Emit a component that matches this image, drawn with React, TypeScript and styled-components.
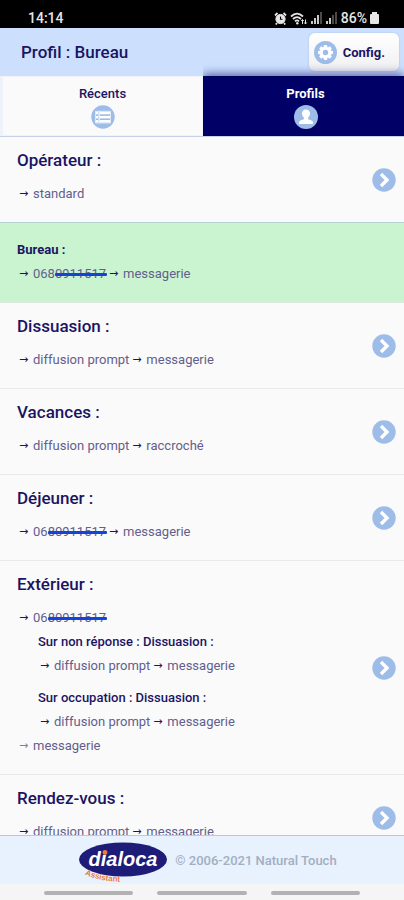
import React from "react";
import styled, { createGlobalStyle } from "styled-components";

const navy = "#1b1463";
const iconBlue = "#9dbce8";

const GlobalStyle = createGlobalStyle`
  * { box-sizing: border-box; }
  body {
    margin: 0;
    background: #fafafa;
    color: ${navy};
    font-family: Roboto, "Liberation Sans", sans-serif;
  }
  h1, h2, h3, p, ul { margin: 0; padding: 0; }
  ul { list-style: none; }
  button { font: inherit; color: inherit; border: 0; cursor: pointer; }
  svg { display: block; }
`;

const Screen = styled.div`
  display: flex;
  flex-direction: column;
  height: 100vh;
  overflow: hidden;
`;

const StatusBar = styled.div`
  flex: none;
  display: flex;
  align-items: flex-end;
  justify-content: space-between;
  height: 28px;
  padding: 0 25px 2px 28px;
  background: #000;
  color: #e6e6e6;
  font-size: 14px;
  font-weight: 500;
  line-height: 16px;
`;

const StatusIcons = styled.div`
  display: flex;
  align-items: center;
  gap: 3px;
`;

const Header = styled.header`
  flex: none;
  display: flex;
  align-items: center;
  justify-content: space-between;
  height: 48px;
  padding: 0 5px 0 21px;
  background: #cce0fe;
`;

const Title = styled.h1`
  font-size: 17px;
  font-weight: 500;
  line-height: 20px;
`;

const ConfigButton = styled.button`
  display: flex;
  align-items: center;
  gap: 6px;
  height: 38px;
  padding: 0 14px 0 5px;
  border-radius: 6px;
  background: linear-gradient(#ffffff, #f0f0f2);
  box-shadow: 0 0 2px rgba(80, 100, 150, 0.3);
  font-size: 13px;
  font-weight: 700;
`;

const Tabs = styled.nav`
  flex: none;
  display: grid;
  grid-template-columns: 1fr 1fr;
  height: 61px;
  padding-left: 2px;
  border-bottom: 1px solid #c5d2e8;
  background: #edf2fb;
`;

const Tab = styled.button<{ $active?: boolean }>`
  display: flex;
  flex-direction: column;
  align-items: center;
  gap: 3px;
  padding: ${(p) => (p.$active ? "9px 0 0 4px" : "9px 0 0")};
  border: 1px solid ${(p) => (p.$active ? "#00005f" : "#f0f3f9")};
  background: ${(p) => (p.$active ? "#000066" : "#fafafa")};
  box-shadow: ${(p) => (p.$active ? "0 -2px 9px rgba(20, 20, 110, 0.65)" : "none")};
  clip-path: ${(p) => (p.$active ? "inset(-14px 0 0 0)" : "none")};
  color: ${(p) => (p.$active ? "#ffffff" : navy)};
  font-size: 13px;
  font-weight: ${(p) => (p.$active ? 700 : 500)};
  line-height: 16px;
`;

const List = styled.ul`
  flex: 1;
  min-height: 0;
  overflow: hidden;
`;

const Row = styled.li<{ $current?: boolean }>`
  display: flex;
  align-items: center;
  justify-content: space-between;
  padding: ${(p) => (p.$current ? "15px 8px 16px 17px" : "12px 8px 16px 17px")};
  border-bottom: 1px solid ${(p) => (p.$current ? "#dfe9e2" : "#e9e9eb")};
  background: ${(p) => (p.$current ? "#caf4cf" : "#fafafa")};
  box-shadow: ${(p) => (p.$current ? "0 -1px 0 #b4d3cf" : "none")};
`;

const RowTitle = styled.h2<{ $small?: boolean }>`
  margin-bottom: ${(p) => (p.$small ? 0 : "11px")};
  font-size: ${(p) => (p.$small ? "13px" : "17px")};
  font-weight: ${(p) => (p.$small ? 700 : 500)};
  line-height: ${(p) => (p.$small ? "24px" : "22px")};
`;

const Step = styled.p`
  display: flex;
  color: #625e8e;
  font-size: 13px;
  line-height: 24px;
  white-space: pre;
`;

const Arrow = styled.span<{ $faded?: boolean }>`
  width: 16px;
  padding-left: 2px;
  color: ${navy};
  font-family: "DejaVu Sans", sans-serif;
  font-size: 11px;
  opacity: ${(p) => (p.$faded ? 0.55 : 1)};
`;

const Target = styled.span`
  margin-right: 1px;
`;

const Masked = styled.span`
  position: relative;

  &::after {
    content: "";
    position: absolute;
    top: 7px;
    left: 0;
    right: -1px;
    height: 3px;
    border-radius: 1px;
    background: #1443d6;
  }
`;

const Branch = styled.div`
  margin-left: 21px;

  & + & { margin-top: 8px; }
`;

const BranchTitle = styled.h3`
  font-size: 13px;
  font-weight: 500;
  line-height: 24px;
`;

const OpenButton = styled.button`
  flex: none;
  padding: 4px 0 0;
  background: none;
`;

const Footer = styled.footer`
  flex: none;
  display: flex;
  align-items: center;
  justify-content: center;
  gap: 8px;
  height: 49px;
  padding-left: 12px;
  border-top: 1px solid #b6c9de;
  background: #e8f1fe;
  color: #a0afc2;
  font-size: 13px;
  font-weight: 500;
`;

const SystemNav = styled.div`
  flex: none;
  display: flex;
  justify-content: center;
  gap: 24px;
  height: 16px;
  padding: 7px 44px 0;
  background: #f5f5f5;
`;

const NavHandle = styled.span`
  flex: 1;
  height: 4px;
  border-radius: 2px;
  background: #b2b2b2;
`;

const AlarmIcon = () => (
  <svg width="13" height="13" viewBox="0 0 13 13" fill="none" stroke="#e6e6e6" aria-hidden="true">
    <circle cx="6.5" cy="7" r="4.6" fill="#e6e6e6" />
    <path d="M1 3.5 3.5 1M12 3.5 9.5 1M3 11l-1.2 1.5M10 11l1.2 1.5" strokeWidth="1.8" />
    <path d="M6.5 4.5V7.2H8.5" stroke="#000" strokeWidth="1.1" />
  </svg>
);

const WifiIcon = () => (
  <svg width="18" height="13" viewBox="0 0 18 13" fill="none" stroke="#e6e6e6" aria-hidden="true">
    <path d="M1 4.5Q7 -1.2 13 4.5M3 7Q7 3.2 11 7M5 9.3Q7 7.4 9 9.3" strokeWidth="1.8" />
    <circle cx="7.3" cy="11.2" r="1.2" fill="#e6e6e6" stroke="none" />
    <path d="M12.5 12V7.5M15.5 7.5V12M11.3 9 12.5 7.5 13.7 9M14.3 10.5 15.5 12 16.7 10.5" />
  </svg>
);

const SignalIcon = ({ level }: { level: number }) => (
  <svg width="12" height="12" viewBox="0 0 12 12" aria-hidden="true">
    {[0, 1, 2, 3].map((i) => (
      <rect key={i} x={i * 3} y={9 - i * 3} width="2" height={3 + i * 3} fill={i < level ? "#c9c9c9" : "#4a4a4a"} />
    ))}
  </svg>
);

const BatteryIcon = () => (
  <svg width="9" height="12" viewBox="0 0 9 12" fill="#e6e6e6" aria-hidden="true">
    <path d="M2 0h5v2h1q1 0 1 1v8q0 1-1 1H1q-1 0-1-1V3q0-1 1-1h1z" />
  </svg>
);

const GearIcon = () => (
  <svg width="23" height="23" viewBox="0 0 23 23" aria-hidden="true">
    <circle cx="11.5" cy="11.5" r="11.5" fill={iconBlue} />
    <g fill="#fff">
      {[0, 45, 90, 135].map((a) => (
        <rect key={a} x="9.7" y="4" width="3.6" height="15" rx="1" transform={`rotate(${a} 11.5 11.5)`} />
      ))}
      <circle cx="11.5" cy="11.5" r="5.8" />
    </g>
    <circle cx="11.5" cy="11.5" r="2.7" fill={iconBlue} />
  </svg>
);

const ListIcon = () => (
  <svg width="24" height="24" viewBox="0 0 24 24" aria-hidden="true">
    <circle cx="12" cy="12" r="11.7" fill={iconBlue} />
    <g fill="#fff">
      {[6.8, 10.9, 15].map((y) => (
        <React.Fragment key={y}>
          <rect x="5" y={y} width="2.2" height="2.5" />
          <rect x="8.6" y={y} width="10.4" height="2.5" />
        </React.Fragment>
      ))}
    </g>
    <path d="M8.1 6.3H19.5V18H8.1zM4.5 6.3h3.6V18H4.5z" fill="none" stroke="#fff" strokeWidth="0.7" />
  </svg>
);

const UserIcon = () => (
  <svg width="24" height="24" viewBox="0 0 24 24" aria-hidden="true">
    <circle cx="12" cy="12" r="12" fill={iconBlue} />
    <path
      d="M12 4.5c2.6 0 4 1.7 4 4.1 0 1.8-.9 3.2-1.9 4.1v1.5c1.9.8 4.9 1.3 4.9 3.4V19H5v-1.4c0-2.1 3-2.6 4.9-3.4v-1.5C8.9 11.8 8 10.4 8 8.6c0-2.4 1.4-4.1 4-4.1z"
      fill="#fff"
    />
  </svg>
);

const ChevronIcon = () => (
  <svg width="24" height="24" viewBox="0 0 24 24" aria-hidden="true">
    <circle cx="12" cy="12" r="11.7" fill={iconBlue} />
    <path d="M9 6 15 12l-6 6" fill="none" stroke="#fff" strokeWidth="3.4" />
  </svg>
);

const Logo = () => (
  <svg width="88" height="48" viewBox="0 0 88 48" role="img" aria-label="dialoca assistant">
    <defs>
      <path id="tagline-curve" d="M6 38.5Q20 45.5 46 46" />
    </defs>
    <ellipse cx="44" cy="23.5" rx="44" ry="17" fill="#1d1c78" />
    <text x="44" y="30" textAnchor="middle" fill="#fff" fontFamily="Liberation Sans, sans-serif" fontSize="20" fontWeight="700" fontStyle="italic">
      dialoca
    </text>
    <circle cx="26" cy="16.5" r="2.4" fill="#ee7c33" />
    <text fill="#ee7c33" fontFamily="Liberation Sans, sans-serif" fontSize="8" fontWeight="700">
      <textPath href="#tagline-curve">Assistant</textPath>
    </text>
  </svg>
);

type Hop = string | { shown: string; masked: string };

const phone: Hop = { shown: "06", masked: "80911517" };
const currentPhone: Hop = { shown: "068", masked: "0911517" };

function Route({ hops, faded }: { hops: Hop[]; faded?: boolean }) {
  return (
    <Step>
      {hops.map((hop, i) => (
        <React.Fragment key={i}>
          <Arrow $faded={faded}>→</Arrow>
          <Target>
            {typeof hop === "string" ? hop : <>{hop.shown}<Masked>{hop.masked}</Masked></>}
          </Target>
        </React.Fragment>
      ))}
    </Step>
  );
}

function Profile({ name, current, children }: { name: string; current?: boolean; children: React.ReactNode }) {
  return (
    <Row $current={current}>
      <div>
        <RowTitle $small={current}>{name} :</RowTitle>
        {children}
      </div>
      {!current && (
        <OpenButton type="button" aria-label={`Activer ${name}`}>
          <ChevronIcon />
        </OpenButton>
      )}
    </Row>
  );
}

export default function App() {
  return (
    <Screen>
      <GlobalStyle />
      <StatusBar>
        <span>14:14</span>
        <StatusIcons>
          <AlarmIcon />
          <WifiIcon />
          <SignalIcon level={3} />
          <SignalIcon level={2} />
          <span>86%</span>
          <BatteryIcon />
        </StatusIcons>
      </StatusBar>
      <Header>
        <Title>Profil : Bureau</Title>
        <ConfigButton type="button">
          <GearIcon />
          Config.
        </ConfigButton>
      </Header>
      <Tabs>
        <Tab type="button">
          Récents
          <ListIcon />
        </Tab>
        <Tab type="button" $active aria-current="page">
          Profils
          <UserIcon />
        </Tab>
      </Tabs>
      <List>
        <Profile name="Opérateur">
          <Route hops={["standard"]} />
        </Profile>
        <Profile name="Bureau" current>
          <Route hops={[currentPhone, "messagerie"]} />
        </Profile>
        <Profile name="Dissuasion">
          <Route hops={["diffusion prompt", "messagerie"]} />
        </Profile>
        <Profile name="Vacances">
          <Route hops={["diffusion prompt", "raccroché"]} />
        </Profile>
        <Profile name="Déjeuner">
          <Route hops={[phone, "messagerie"]} />
        </Profile>
        <Profile name="Extérieur">
          <Route hops={[phone]} />
          <Branch>
            <BranchTitle>Sur non réponse : Dissuasion :</BranchTitle>
            <Route hops={["diffusion prompt", "messagerie"]} />
          </Branch>
          <Branch>
            <BranchTitle>Sur occupation : Dissuasion :</BranchTitle>
            <Route hops={["diffusion prompt", "messagerie"]} />
          </Branch>
          <Route hops={["messagerie"]} faded />
        </Profile>
        <Profile name="Rendez-vous">
          <Route hops={["diffusion prompt", "messagerie"]} />
        </Profile>
      </List>
      <Footer>
        <Logo />
        <span>© 2006-2021 Natural Touch</span>
      </Footer>
      <SystemNav>
        <NavHandle />
        <NavHandle />
        <NavHandle />
      </SystemNav>
    </Screen>
  );
}
